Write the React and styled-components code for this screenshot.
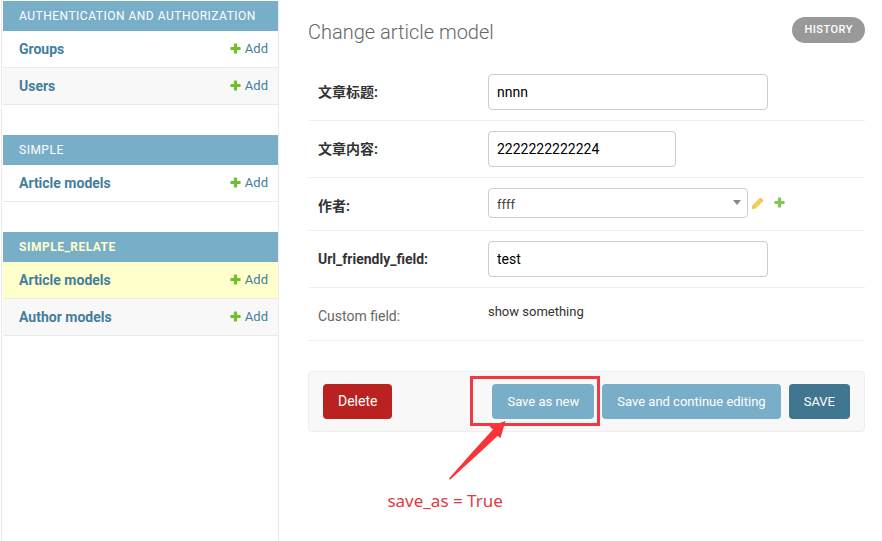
import React from "react";
import styled, { createGlobalStyle, css } from "styled-components";

const GlobalStyle = createGlobalStyle`
  *, *::before, *::after { box-sizing: border-box; }
  body {
    margin: 0;
    background: #fff;
    color: #333;
    font-family: Roboto, "Noto Sans CJK SC", sans-serif;
    font-size: 14px;
  }
`;

const Page = styled.div`
  display: flex;
  min-height: 100vh;
`;

const Sidebar = styled.nav`
  flex: 0 0 278px;
  margin-left: 1px;
  padding: 1px 0 0 1px;
  border: solid #eaeaea;
  border-width: 0 1px;
  display: flex;
  flex-direction: column;
  gap: 30px;
`;

const Module = styled.table`
  width: 100%;
  border-spacing: 0;
`;

const Caption = styled.caption`
  padding: 0 16px;
  background: #79aec8;
  text-align: left;
  font-size: 12px;
  line-height: 30px;
  letter-spacing: 0.5px;
  text-transform: uppercase;
`;

const AppLink = styled.a`
  color: ${(p) => (p.$current ? "#ffc" : "#fff")};
  font-weight: ${(p) => (p.$current ? 700 : 400)};
  text-decoration: none;
`;

const ModelRow = styled.tr`
  height: 37px;
  background: ${(p) => (p.$current ? "#ffc" : p.$striped ? "#f8f8f8" : "#fff")};
`;

const ModelName = styled.th`
  padding: 0 16px;
  border-bottom: 1px solid #eaeaea;
  text-align: left;
  font-size: 14px;
`;

const ModelAction = styled.td`
  padding: 0 10px;
  border-bottom: 1px solid #eaeaea;
  text-align: right;
  font-size: 13px;
`;

const Link = styled.a`
  color: #447e9b;
  text-decoration: none;
`;

const AddLink = styled(Link)`
  display: inline-flex;
  align-items: center;
  gap: 4px;
`;

const Main = styled.main`
  flex: 1;
  min-width: 0;
  padding: 17px 17px 0 29px;
`;

const Header = styled.header`
  display: flex;
  justify-content: space-between;
  align-items: flex-start;
  height: 47px;
`;

const Title = styled.h1`
  margin: 0;
  color: #666;
  font-size: 20px;
  font-weight: 300;
  line-height: 30px;
`;

const HistoryLink = styled.a`
  padding: 0 12px;
  border-radius: 15px;
  background: #999;
  color: #fff;
  font-size: 11px;
  font-weight: 500;
  line-height: 26px;
  letter-spacing: 0.5px;
  text-decoration: none;
  text-transform: uppercase;
`;

const FormRow = styled.div`
  display: flex;
  align-items: flex-start;
  min-height: 53px;
  padding: 10px;
  border-bottom: 1px solid #eee;
`;

const labelStyle = css`
  flex: 0 0 170px;
  padding-top: 10px;
  line-height: 16px;
`;

const Label = styled.label`
  ${labelStyle}
  font-weight: 700;
`;

const ReadonlyLabel = styled.span`
  ${labelStyle}
  color: #666;
`;

const ReadonlyValue = styled.span`
  font-size: 13px;
  line-height: 28px;
`;

const TextInput = styled.input`
  width: ${(p) => (p.$short ? "188px" : "280px")};
  height: 36px;
  padding: 0 8px;
  border: 1px solid #ccc;
  border-radius: 4px;
  background: #fff;
  color: #000;
  font: inherit;
`;

const Related = styled.div`
  display: flex;
  align-items: center;
  gap: 10px;
  height: 30px;
`;

const SelectBox = styled.div`
  position: relative;
  margin-right: -7px;
  color: #888;
`;

const Select = styled.select`
  appearance: none;
  display: block;
  width: 260px;
  height: 30px;
  padding: 2px 20px 0 8px;
  border: 1px solid #ccc;
  border-radius: 4px;
  background: #fff;
  color: #444;
  font-family: inherit;
  font-size: 13px;
`;

const SelectArrow = styled.svg`
  position: absolute;
  right: 7px;
  top: 12px;
  pointer-events: none;
`;

const IconLink = styled.a`
  display: flex;
  width: 13px;
  height: 13px;
`;

const SubmitRow = styled.div`
  display: flex;
  gap: 8px;
  margin-top: 30px;
  padding: 12px 14px;
  border: 1px solid #eee;
  border-radius: 4px;
  background: #f8f8f8;
`;

const tones = {
  danger: "#ba2121",
  normal: "#79aec8",
  primary: "#417690",
};

const buttonStyle = css`
  height: 35px;
  padding: 0 15px;
  border: 0;
  border-radius: 4px;
  background: ${(p) => tones[p.$tone]};
  color: #fff;
  font-family: inherit;
  line-height: 35px;
  text-decoration: none;
  white-space: nowrap;
`;

const Button = styled.button`
  ${buttonStyle}
  font-size: 13px;
`;

const DeleteLink = styled.a`
  ${buttonStyle}
  margin-right: auto;
  font-size: 14px;
`;

const Annotated = styled.div`
  position: relative;
`;

const Highlight = styled.div`
  position: absolute;
  inset: -8px -6px -7px -22px;
  border: 3px solid #ed3b41;
  pointer-events: none;
`;

const Arrow = styled.svg`
  position: absolute;
  left: -44px;
  top: 36px;
  pointer-events: none;
`;

const Note = styled.div`
  position: absolute;
  left: -105px;
  top: 106px;
  color: #e23a40;
  font-family: "Noto Sans", sans-serif;
  font-size: 17px;
  line-height: 22px;
  white-space: nowrap;
`;

function PlusIcon({ color = "#70bf2b", size = 11 }) {
  return (
    <svg width={size} height={size} viewBox="0 0 11 11" aria-hidden="true">
      <path
        d="M4.5 .4h2q.6 0 .6.6v2.9H10q.6 0 .6.6v2q0 .6-.6.6H7.1V10q0 .6-.6.6h-2q-.6 0-.6-.6V7.1H1q-.6 0-.6-.6v-2q0-.6.6-.6h2.9V1q0-.6.6-.6z"
        fill={color}
      />
    </svg>
  );
}

function PencilIcon() {
  return (
    <svg width="13" height="13" viewBox="0 0 13 13" aria-hidden="true">
      <path d="M8.6 1.2q.8-.7 1.6 0l1.6 1.6q.7.8 0 1.6L4.6 11.6l-3.8.6.6-3.8z" fill="#efb80b" opacity=".8" />
      <path d="M7.6 2.9l2.5 2.5M3.2 8.9l4.2-4.2M4.5 10.1l4.2-4.2M2 10.9l.8.2" stroke="#fff" strokeWidth=".6" fill="none" opacity=".65" />
    </svg>
  );
}

const modules = [
  { name: "Authentication and Authorization", models: [{ name: "Groups" }, { name: "Users" }] },
  { name: "Simple", models: [{ name: "Article models" }] },
  {
    name: "Simple_Relate",
    current: true,
    models: [{ name: "Article models", current: true }, { name: "Author models" }],
  },
];

function AppModule({ name, current, models }) {
  return (
    <Module>
      <Caption>
        <AppLink href="#" $current={current}>{name}</AppLink>
      </Caption>
      <tbody>
        {models.map((model, i) => (
          <ModelRow key={model.name} $current={model.current} $striped={i % 2 === 1}>
            <ModelName scope="row"><Link href="#">{model.name}</Link></ModelName>
            <ModelAction><AddLink href="#"><PlusIcon />Add</AddLink></ModelAction>
          </ModelRow>
        ))}
      </tbody>
    </Module>
  );
}

function TextRow({ id, label, value, short }) {
  return (
    <FormRow>
      <Label htmlFor={id}>{label}</Label>
      <TextInput id={id} type="text" defaultValue={value} $short={short} />
    </FormRow>
  );
}

export default function App() {
  return (
    <>
      <GlobalStyle />
      <Page>
        <Sidebar>
          {modules.map((m) => <AppModule key={m.name} {...m} />)}
        </Sidebar>
        <Main>
          <Header>
            <Title>Change article model</Title>
            <HistoryLink href="#">History</HistoryLink>
          </Header>
          <form onSubmit={(e) => e.preventDefault()}>
            <TextRow id="title" label="文章标题:" value="nnnn" />
            <TextRow id="content" label="文章内容:" value="2222222222224" short />
            <FormRow>
              <Label htmlFor="author">作者:</Label>
              <Related>
                <SelectBox>
                  <Select id="author" defaultValue="ffff">
                    <option>ffff</option>
                  </Select>
                  <SelectArrow width="8" height="5" viewBox="0 0 8 5" aria-hidden="true">
                    <path d="M0 0h8L4 5z" fill="currentColor" />
                  </SelectArrow>
                </SelectBox>
                <IconLink href="#" aria-label="Change author"><PencilIcon /></IconLink>
                <IconLink href="#" aria-label="Add author"><PlusIcon color="#84c652" /></IconLink>
              </Related>
            </FormRow>
            <TextRow id="url" label="Url_friendly_field:" value="test" />
            <FormRow>
              <ReadonlyLabel>Custom field:</ReadonlyLabel>
              <ReadonlyValue>show something</ReadonlyValue>
            </FormRow>
            <SubmitRow>
              <DeleteLink href="#" $tone="danger">Delete</DeleteLink>
              <Annotated>
                <Button type="submit" $tone="normal">Save as new</Button>
                <Highlight />
                <Arrow width="60" height="62" viewBox="0 0 60 62" aria-hidden="true">
                  <path d="M57.5 1L41.5 6.5 45 9.5 24 32.5 1 58.5 2 59.7 28.5 35.5 49.5 16 52.5 18z" fill="#fa3338" />
                </Arrow>
                <Note>save_as = True</Note>
              </Annotated>
              <Button type="submit" $tone="normal">Save and continue editing</Button>
              <Button type="submit" $tone="primary">SAVE</Button>
            </SubmitRow>
          </form>
        </Main>
      </Page>
    </>
  );
}
